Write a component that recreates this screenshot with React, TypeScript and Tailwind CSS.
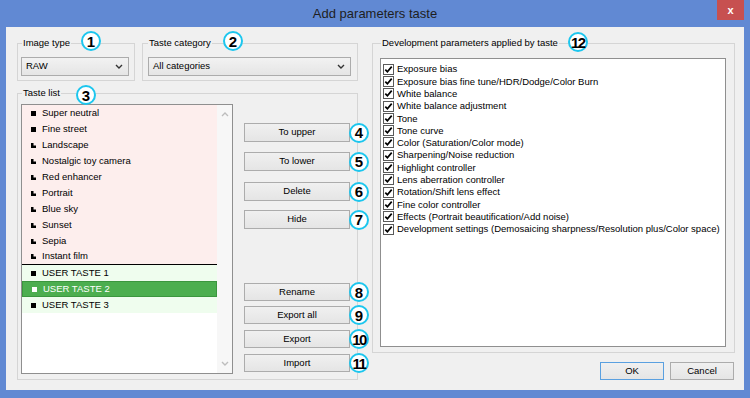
import React from 'react';

type Taste = { name: string; icon: 'full' | 'step'; user?: boolean; selected?: boolean };

const tastes: Taste[] = [
  { name: 'Super neutral', icon: 'full' },
  { name: 'Fine street', icon: 'full' },
  { name: 'Landscape', icon: 'step' },
  { name: 'Nostalgic toy camera', icon: 'step' },
  { name: 'Red enhancer', icon: 'step' },
  { name: 'Portrait', icon: 'step' },
  { name: 'Blue sky', icon: 'step' },
  { name: 'Sunset', icon: 'step' },
  { name: 'Sepia', icon: 'step' },
  { name: 'Instant film', icon: 'step' },
  { name: 'USER TASTE 1', icon: 'full', user: true },
  { name: 'USER TASTE 2', icon: 'full', user: true, selected: true },
  { name: 'USER TASTE 3', icon: 'full', user: true },
];

const params = [
  'Exposure bias',
  'Exposure bias fine tune/HDR/Dodge/Color Burn',
  'White balance',
  'White balance adjustment',
  'Tone',
  'Tone curve',
  'Color (Saturation/Color mode)',
  'Sharpening/Noise reduction',
  'Highlight controller',
  'Lens aberration controller',
  'Rotation/Shift lens effect',
  'Fine color controller',
  'Effects (Portrait beautification/Add noise)',
  'Development settings (Demosaicing sharpness/Resolution plus/Color space)',
];

function Badge({ n, className = '' }: { n: number; className?: string }) {
  return (
    <span
      className={`flex items-center justify-center w-[20px] h-[20px] shrink-0 rounded-full border-2 border-[#1cc6ee] bg-white text-[15px] font-bold leading-none text-black ${n > 9 ? 'tracking-[-1.5px] text-[14px]' : ''} ${className}`}
    >
      {n}
    </span>
  );
}

function TasteIcon({ kind, white }: { kind: 'full' | 'step'; white?: boolean }) {
  const fill = white ? '#ffffff' : '#000000';
  return (
    <svg width="5" height="5" viewBox="0 0 5 5" className="shrink-0">
      {kind === 'full' ? <rect width="5" height="5" fill={fill} /> : <path d="M0 0H2.5V2.5H5V5H0Z" fill={fill} />}
    </svg>
  );
}

function Chevron({ color = '#333' }: { color?: string }) {
  return (
    <svg width="8" height="5" viewBox="0 0 8 5">
      <path d="M1 1L4 4L7 1" fill="none" stroke={color} strokeWidth="1.4" />
    </svg>
  );
}

function Select({ value }: { value: string }) {
  return (
    <div className="h-[19px] flex items-center justify-between border border-[#acacac] bg-gradient-to-b from-[#f2f2f2] to-[#e5e5e5] pl-[4px] pr-[5px]">
      <span>{value}</span>
      <Chevron />
    </div>
  );
}

function Btn({ label, h = 'h-[19px]', n }: { label: string; h?: string; n: number }) {
  return (
    <div className={`w-[106px] flex items-center ${h}`}>
      <button className={`w-[106px] shrink-0 ${h} border border-[#acacac] bg-gradient-to-b from-[#f0f0f0] to-[#e5e5e5] text-black`}>
        {label}
      </button>
      <Badge n={n} className="-mr-[20px] -ml-[1px]" />
    </div>
  );
}

function Check() {
  return (
    <svg width="11" height="11" viewBox="0 0 11 11" className="shrink-0">
      <rect x="0.5" y="0.5" width="10" height="10" fill="#fff" stroke="#5a5a5a" />
      <path d="M2.3 5.6L4.4 7.8L8.7 2.6" fill="none" stroke="#000" strokeWidth="1.7" />
    </svg>
  );
}

export default function App() {
  return (
    <div className="w-[750px] h-[398px] bg-[#6189d3] flex flex-col font-['Liberation_Sans',Arial,sans-serif] text-[9.5px] text-black">
      {/* title bar */}
      <div className="relative h-[27px] flex items-center justify-center">
        <span className="text-[13px] text-[#1e1e1e]">Add parameters taste</span>
        <div className="absolute right-[6px] top-0 w-[27px] h-[20px] bg-[#c75050] flex items-center justify-center text-white text-[11px] font-bold">
          x
        </div>
      </div>

      <div className="mx-[6px] mb-[8px] flex-1 bg-[#f0f0f0] flex pl-[11px] pr-[9px] pt-[10px] pb-[10px]">
        {/* left column */}
        <div className="w-[341px] shrink-0 flex flex-col">
          <div className="flex gap-[7px]">
            <fieldset className="w-[118px] min-w-0 border border-[#d5d5d5] pl-[3px] pr-[5px] pt-[8px] pb-[4px]">
              <legend className="relative ml-[1px] px-[1px] leading-[12px]">
                Image type
                <Badge n={1} className="absolute left-full top-[-6px] ml-[10px]" />
              </legend>
              <Select value="RAW" />
            </fieldset>
            <fieldset className="w-[216px] min-w-0 border border-[#d5d5d5] pl-[5px] pr-[6px] pt-[8px] pb-[4px]">
              <legend className="relative px-[1px] leading-[12px]">
                Taste category
                <Badge n={2} className="absolute left-full top-[-6px] ml-[11px]" />
              </legend>
              <Select value="All categories" />
            </fieldset>
          </div>

          <fieldset className="mt-[6px] w-[341px] flex-1 min-h-0 min-w-0 border border-[#d5d5d5] pl-[3px] pt-[5px] pb-[5px] flex">
            <legend className="relative ml-[1px] px-[1px] leading-[12px]">
              Taste list
              <Badge n={3} className="absolute left-full top-[-2px] ml-[15px]" />
            </legend>
            <div className="w-[212px] shrink-0 flex border border-[#8f8f8f] bg-white">
              <div className="flex-1 flex flex-col">
                {tastes.map((t, i) => (
                  <div
                    key={t.name}
                    className={`h-[16px] flex items-center gap-[6px] pl-[9px] ${
                      t.selected
                        ? 'bg-[#4cae4f] border border-[#3b963e] pl-[8px] text-white'
                        : t.user
                        ? 'bg-[#effdee]'
                        : 'bg-[#fdeeed]'
                    } ${i === 9 ? 'border-b border-black' : ''}`}
                  >
                    <TasteIcon kind={t.icon} white={t.selected} />
                    <span className="whitespace-nowrap">{t.name}</span>
                  </div>
                ))}
              </div>
              <div className="w-[15px] bg-[#f7f7f7] flex flex-col items-center justify-between py-[7px]">
                <svg width="8" height="5" viewBox="0 0 8 5">
                  <path d="M1 4L4 1L7 4" fill="none" stroke="#bdbdbd" strokeWidth="1.3" />
                </svg>
                <Chevron color="#bdbdbd" />
              </div>
            </div>

            <div className="ml-[11px] w-[106px] shrink-0 flex flex-col pt-[19px]">
              <Btn label="To upper" n={4} />
              <div className="mt-[10px]">
                <Btn label="To lower" n={5} />
              </div>
              <div className="mt-[11px]">
                <Btn label="Delete" n={6} />
              </div>
              <div className="mt-[9px]">
                <Btn label="Hide" n={7} />
              </div>
              <div className="mt-[54px]">
                <Btn label="Rename" h="h-[18px]" n={8} />
              </div>
              <div className="mt-[5px]">
                <Btn label="Export all" h="h-[18px]" n={9} />
              </div>
              <div className="mt-[6px]">
                <Btn label="Export" h="h-[18px]" n={10} />
              </div>
              <div className="mt-[6px]">
                <Btn label="Import" h="h-[18px]" n={11} />
              </div>
            </div>
          </fieldset>
        </div>

        {/* right column */}
        <div className="ml-[14px] flex-1 min-w-0 flex flex-col">
          <fieldset className="flex-1 min-h-0 min-w-0 border border-[#d5d5d5] pl-[7px] pr-[8px] pt-[9px] pb-[5px] flex flex-col">
            <legend className="relative ml-[1px] px-[1px] leading-[12px]">
              Development parameters applied by taste
              <Badge n={12} className="absolute left-full top-[-5px] ml-[9px]" />
            </legend>
            <div className="flex-1 border border-[#8f8f8f] bg-white pl-[2px] pt-[4px]">
              {params.map((p) => (
                <div key={p} className="h-[12.3px] flex items-center gap-[3px] leading-none">
                  <Check />
                  <span className="whitespace-nowrap">{p}</span>
                </div>
              ))}
            </div>
          </fieldset>
          <div className="mt-[9px] flex justify-end gap-[6px] pr-[1px]">
            <button className="w-[64px] h-[18px] border border-[#5aa0e0] bg-gradient-to-b from-[#f0f0f0] to-[#e5e5e5]">
              OK
            </button>
            <button className="w-[64px] h-[18px] border border-[#acacac] bg-gradient-to-b from-[#f0f0f0] to-[#e5e5e5]">
              Cancel
            </button>
          </div>
        </div>
      </div>
    </div>
  );
}
